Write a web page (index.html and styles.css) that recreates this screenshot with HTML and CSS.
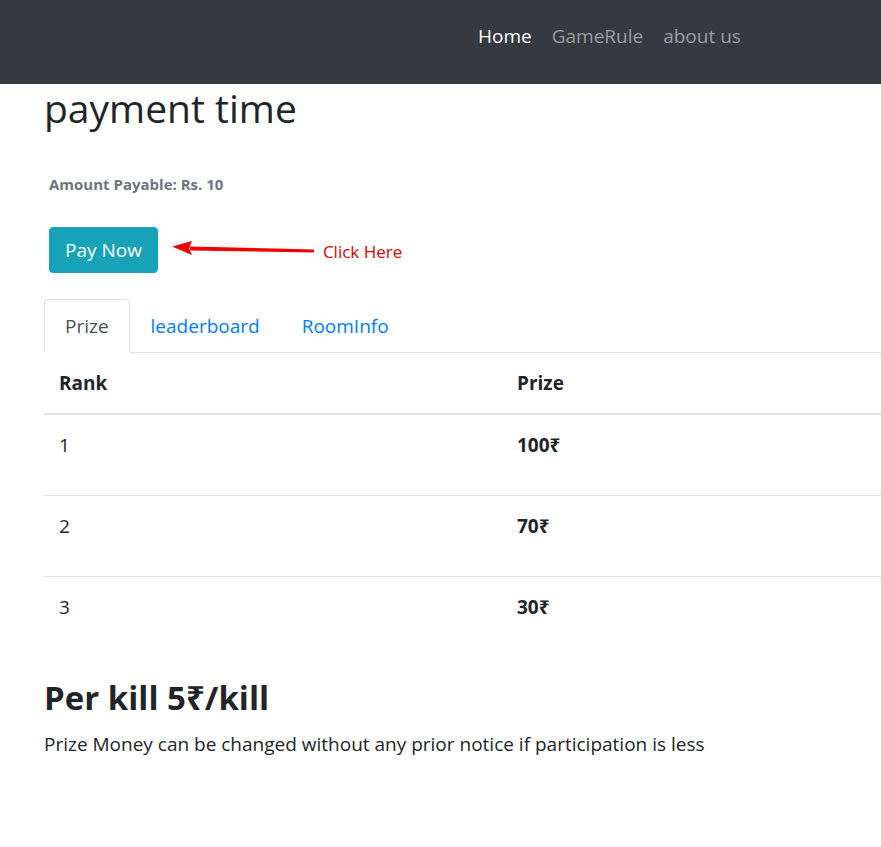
FILE: index.html
```html
<!DOCTYPE html>
<html lang="en">
<head>
<meta charset="utf-8">
<title>payment time</title>
<link rel="stylesheet" href="styles.css">
</head>
<body>
<nav class="navbar">
  <ul class="nav-links">
    <li><a class="nav-link active" href="#">Home</a></li>
    <li><a class="nav-link" href="#">GameRule</a></li>
    <li><a class="nav-link" href="#">about us</a></li>
  </ul>
</nav>
<main class="container">
  <h2 class="title">payment time</h2>
  <div class="pay-box">
    <p class="amount">Amount Payable: Rs. 10</p>
    <div class="pay-row">
      <button class="btn-pay" type="button">Pay Now</button>
      <svg class="arrow" width="150" height="20" viewBox="0 0 150 20">
        <path d="M18 6.5 L142 9.5 L142 12.5 L18 10.5 Z" fill="#ee0000"/>
        <path d="M0 6.5 L20 1 L17 8.5 L20 15 Z" fill="#ee0000"/>
      </svg>
      <span class="click-here">Click Here</span>
    </div>
  </div>
  <ul class="nav-tabs">
    <li><a class="tab active" href="#">Prize</a></li>
    <li><a class="tab" href="#">leaderboard</a></li>
    <li><a class="tab" href="#">RoomInfo</a></li>
  </ul>
  <table class="prize-table">
    <thead>
      <tr><th>Rank</th><th>Prize</th></tr>
    </thead>
    <tbody>
      <tr><td><p>1</p></td><td><p><b>100₹</b></p></td></tr>
      <tr><td><p>2</p></td><td><p><b>70₹</b></p></td></tr>
      <tr><td><p>3</p></td><td><p><b>30₹</b></p></td></tr>
    </tbody>
  </table>
  <h3 class="per-kill">Per kill 5₹/kill</h3>
  <p class="note">Prize Money can be changed without any prior notice if participation is less</p>
</main>
</body>
</html>
```
FILE: styles.css
```css
html {
  overflow-x: hidden;
}
body {
  margin: 0;
  font-family: "Open Sans", "Noto Sans", sans-serif;
  font-size: 19px;
  line-height: 30px;
  color: #212529;
  background: #fff;
  overflow-x: hidden;
}
.navbar {
  background: #343a40;
  height: 84px;
  display: flex;
  align-items: flex-start;
  padding-left: 468px;
  box-sizing: border-box;
  padding-top: 11px;
}
.nav-links {
  list-style: none;
  margin: 0;
  padding: 0;
  display: flex;
}
.nav-link {
  display: block;
  padding: 10px 10px;
  text-decoration: none;
  color: rgba(255, 255, 255, 0.5);
}
.nav-link.active {
  color: #fff;
}
.container {
  padding-left: 44px;
}
.title {
  margin: 0 0 10px;
  font-size: 39px;
  font-weight: 500;
  line-height: 48px;
}
.pay-box {
  padding-left: 5px;
}
.amount {
  margin: 40px 0 0;
  font-size: 15px;
  font-weight: 700;
  color: #6c757d;
  line-height: 24px;
}
.pay-row {
  display: flex;
  align-items: center;
  margin-top: 31px;
}
.btn-pay {
  font-family: inherit;
  font-size: 19px;
  line-height: 30px;
  padding: 7px 15px;
  color: #fff;
  background: #17a2b8;
  border: 1px solid #17a2b8;
  border-radius: 4px;
}
.arrow {
  margin-left: 14px;
}
.click-here {
  margin-left: 1px;
  color: #e00000;
  font-size: 17px;
  margin-top: 4px;
}
.nav-tabs {
  list-style: none;
  margin: 26px 0 0;
  padding: 0;
  display: flex;
  border-bottom: 1px solid #dee2e6;
  width: 1000px;
}
.tab {
  display: block;
  padding: 11px 20px;
  line-height: 30px;
  text-decoration: none;
  color: #007bff;
  border: 1px solid transparent;
  border-top-left-radius: 4px;
  border-top-right-radius: 4px;
  margin-bottom: -1px;
}
.tab.active {
  color: #495057;
  background: #fff;
  border-color: #dee2e6 #dee2e6 #fff;
}
.prize-table {
  width: 916px;
  border-collapse: collapse;
  margin-bottom: 20px;
}
.prize-table th,
.prize-table td {
  text-align: left;
  padding: 15px;
  vertical-align: top;
  line-height: 30px;
}
.prize-table th {
  border-bottom: 2px solid #dee2e6;
  font-weight: 700;
}
.prize-table th:first-child,
.prize-table td:first-child {
  width: 428px;
}
.prize-table tbody tr + tr td {
  border-top: 1px solid #dee2e6;
}
.prize-table td p {
  margin: 0 0 20px;
}
.per-kill {
  margin: 0 0 10px;
  font-size: 33px;
  font-weight: 700;
  line-height: 42px;
}
.note {
  margin: 0;
}
```
